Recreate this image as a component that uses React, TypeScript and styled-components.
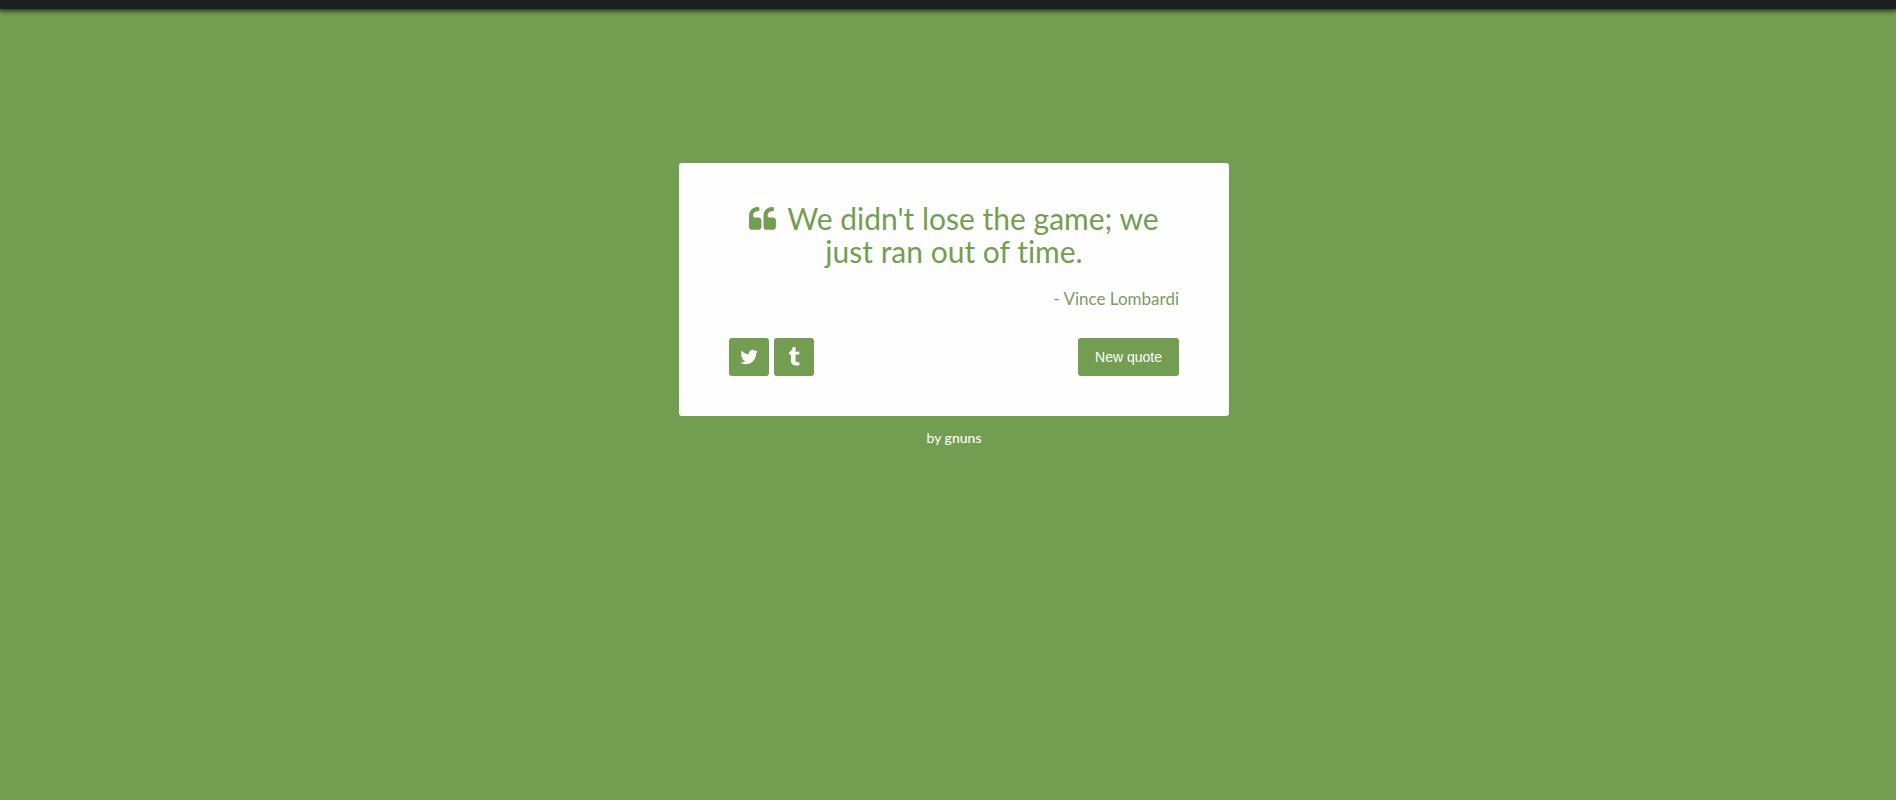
import React, { useState } from "react";
import styled, { createGlobalStyle } from "styled-components";

const GREEN = "#739e51";

const GlobalStyle = createGlobalStyle`
  *, *::before, *::after { box-sizing: border-box; }
  body {
    margin: 0;
    background: ${GREEN};
    font-family: Lato, "Open Sans", sans-serif;
    font-variant-ligatures: none;
  }
`;

const TopBar = styled.header`
  height: 9px;
  background: #1e1f24;
  box-shadow: 0 1px 5px 1px rgba(0, 0, 0, 0.7);
`;

const Page = styled.main`
  display: flex;
  flex-direction: column;
  align-items: center;
  padding: 154px 0 40px 12px;
`;

const Card = styled.section`
  width: 100%;
  max-width: 550px;
  padding: 39px 50px 40px;
  border-radius: 3px;
  background: #fefefe;
  color: ${GREEN};
`;

const Quote = styled.blockquote`
  margin: 0;
  font-size: 30px;
  line-height: 33px;
  text-align: center;
`;

const QuoteMark = styled.svg`
  width: 29px;
  height: 29px;
  margin-right: 9px;
  vertical-align: -4px;
  fill: currentColor;
`;

const Author = styled.p`
  margin: 21px 0 30px;
  color: #7d9a66;
  font-size: 17px;
  line-height: 19px;
  text-align: right;
`;

const Actions = styled.div`
  display: flex;
  gap: 5px;
`;

const buttonBase = `
  display: flex;
  align-items: center;
  justify-content: center;
  height: 38px;
  border: 0;
  border-radius: 3px;
  background: ${GREEN};
  color: #fff;
  cursor: pointer;
`;

const ShareLink = styled.a`
  ${buttonBase}
  width: 40px;
`;

const ShareIcon = styled.svg`
  width: 20px;
  height: 20px;
  fill: currentColor;
`;

const NewQuoteButton = styled.button`
  ${buttonBase}
  margin-left: auto;
  padding: 0 17px;
  font: 14px "Liberation Sans", Arial, sans-serif;
`;

const Credit = styled.footer`
  margin-top: 14px;
  color: #fff;
  font-size: 14px;
  line-height: 16px;
`;

const CreditLink = styled.a`
  color: inherit;
  font-weight: 500;
  text-decoration: none;
`;

const TWITTER =
  "M1684 408q-67 98-162 167 1 14 1 42 0 130-38 259.5t-115.5 248.5-184.5 210.5-258 146-323 54.5q-271 0-496-145 35 4 78 4 225 0 401-138-105-2-188-64.5t-114-159.5q33 5 61 5 43 0 85-11-112-23-185.5-111.5t-73.5-205.5v-4q68 38 146 41-66-44-105-115t-39-154q0-88 44-163 121 149 294.5 238.5t371.5 99.5q-8-38-8-74 0-134 94.5-228.5t228.5-94.5q140 0 236 102 109-21 205-78-37 115-142 178 93-10 186-50z";
const TUMBLR =
  "M1328 1329l80 237q-23 35-111 66t-177 32q-104 2-190.5-26t-142.5-74-95-106-55.5-120-16.5-118v-544h-168v-215q72-26 129-69.5t91-90 58-102 34-99 15-88.5q1-5 4.5-8.5t7.5-3.5h244v424h333v252h-334v518q0 30 6.5 56t22.5 52.5 49.5 41.5 81.5 14q78-2 134-29z";
const MARK =
  "M768 960v384q0 80-56 136t-136 56h-384q-80 0-136-56t-56-136v-704q0-104 40.5-198.5t109.5-163.5 163.5-109.5 198.5-40.5h64q26 0 45 19t19 45v128q0 26-19 45t-45 19h-64q-106 0-181 75t-75 181v32q0 40 28 68t68 28h224q80 0 136 56t56 136z";

const quotes = [
  { text: "We didn't lose the game; we just ran out of time.", author: "Vince Lombardi" },
];

export default function App() {
  const [index, setIndex] = useState(0);
  const { text, author } = quotes[index];

  return (
    <>
      <GlobalStyle />
      <TopBar />
      <Page>
        <Card>
          <Quote>
            <QuoteMark viewBox="0 0 1792 1792" aria-hidden="true">
              <path d={MARK} />
              <path d={MARK} transform="translate(896 0)" />
            </QuoteMark>
            {text}
          </Quote>
          <Author>- {author}</Author>
          <Actions>
            <ShareLink href="#twitter" aria-label="Share on Twitter">
              <ShareIcon viewBox="0 0 1792 1792">
                <path d={TWITTER} />
              </ShareIcon>
            </ShareLink>
            <ShareLink href="#tumblr" aria-label="Share on Tumblr">
              <ShareIcon viewBox="0 0 1792 1792">
                <path d={TUMBLR} />
              </ShareIcon>
            </ShareLink>
            <NewQuoteButton type="button" onClick={() => setIndex((index + 1) % quotes.length)}>
              New quote
            </NewQuoteButton>
          </Actions>
        </Card>
        <Credit>
          by <CreditLink href="#gnuns">gnuns</CreditLink>
        </Credit>
      </Page>
    </>
  );
}
